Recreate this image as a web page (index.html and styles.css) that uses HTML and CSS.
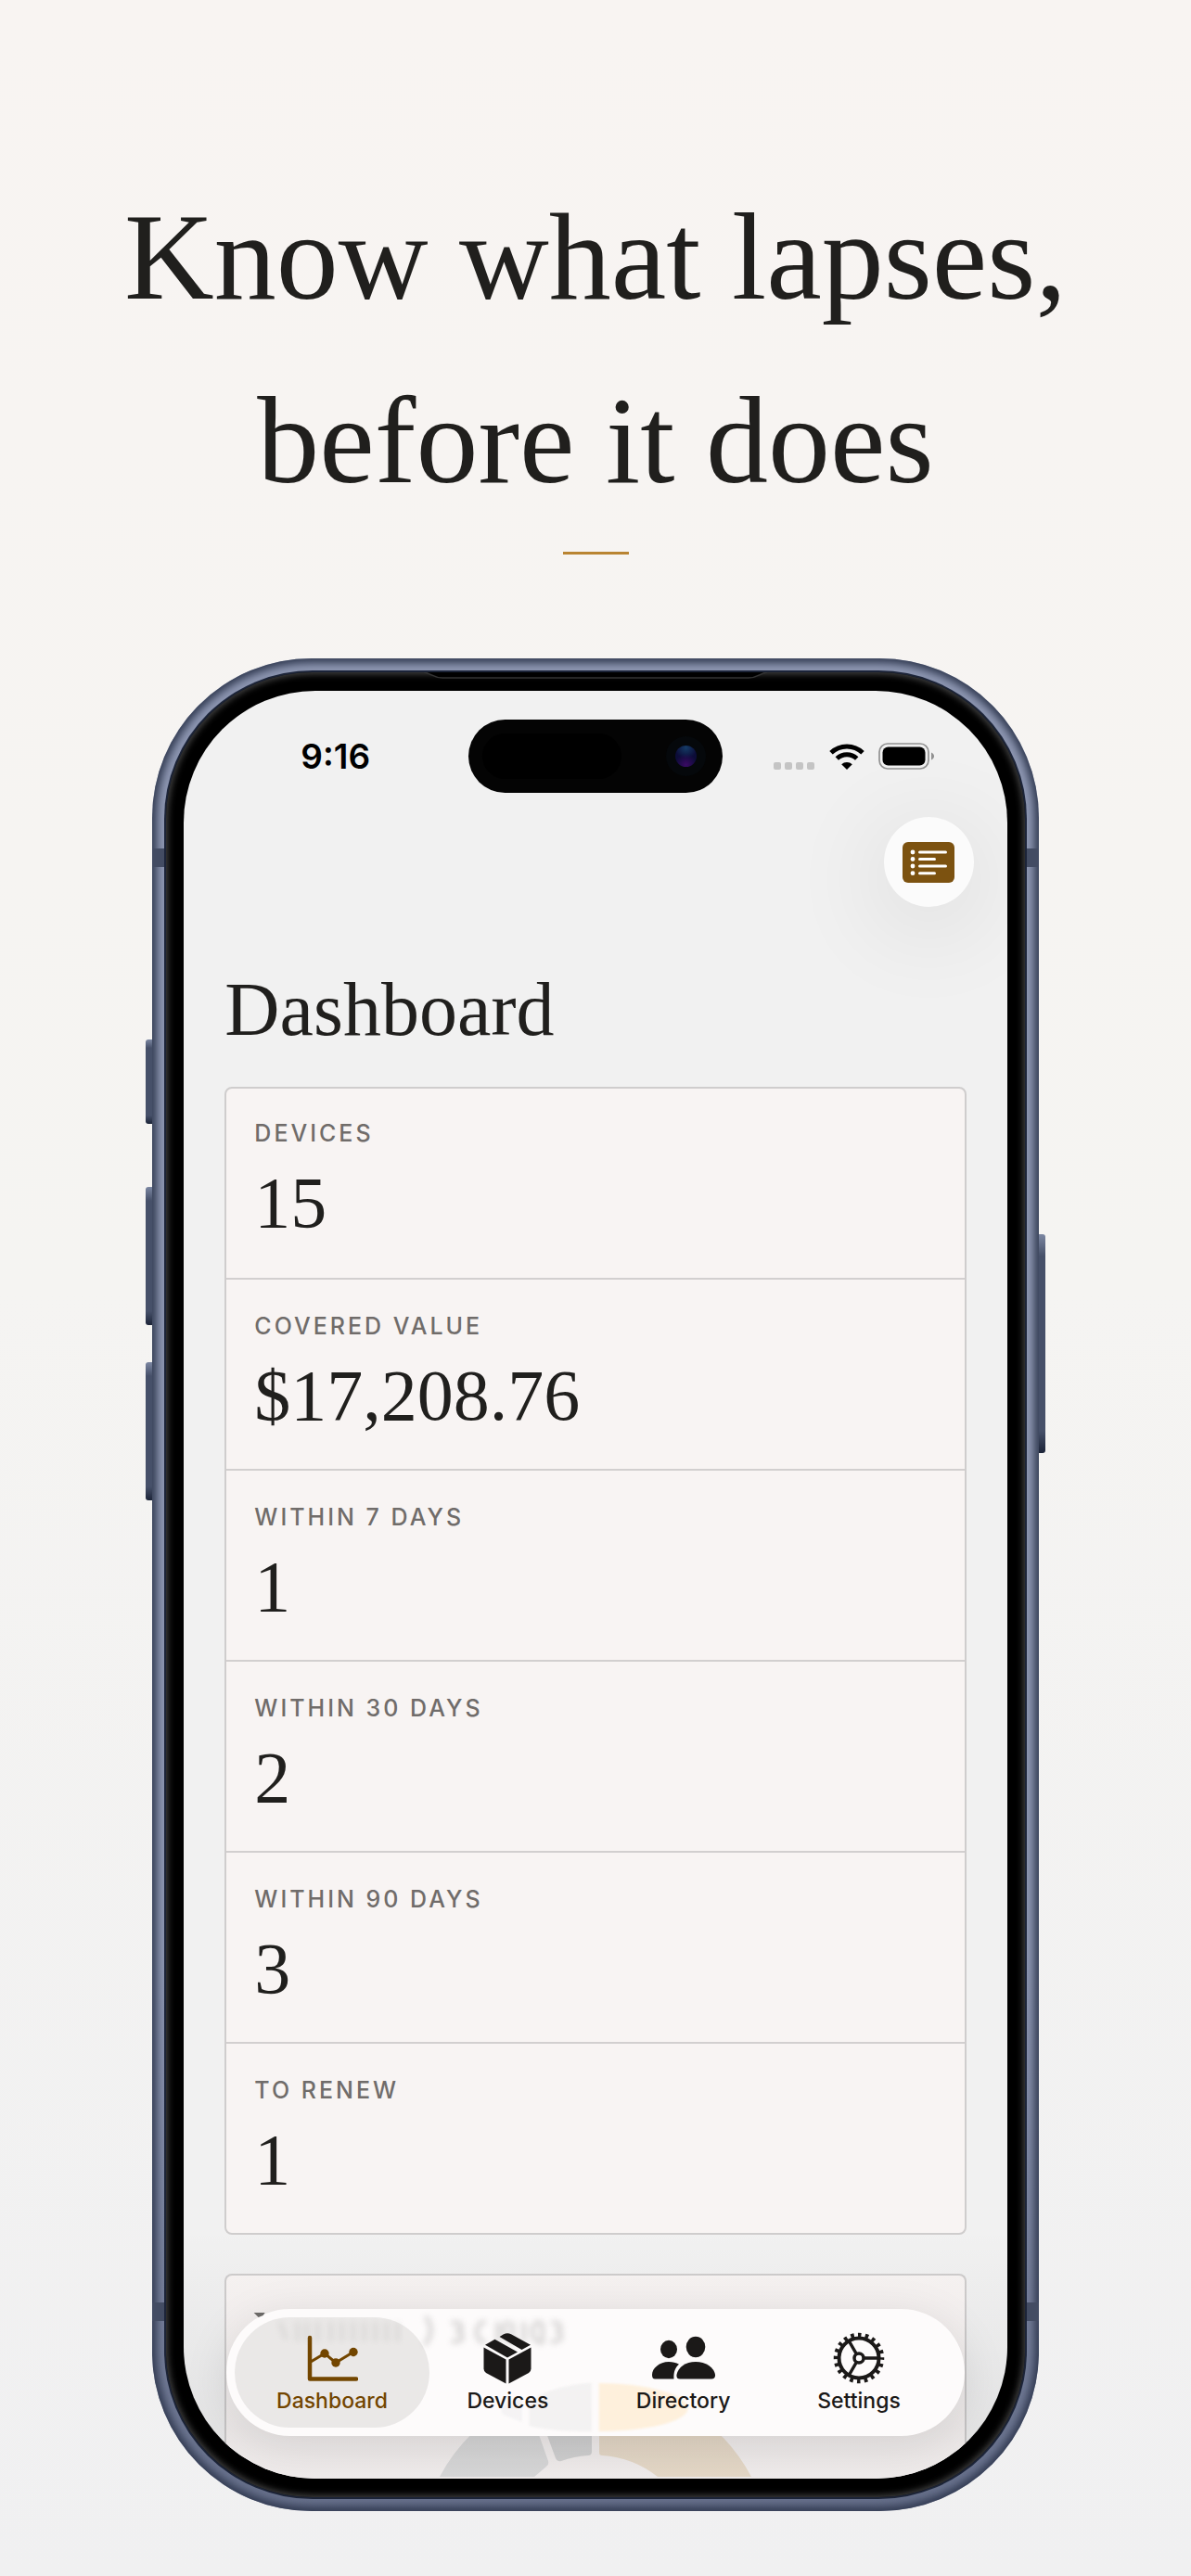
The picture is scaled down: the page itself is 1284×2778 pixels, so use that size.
FILE: index.html
```html
<!DOCTYPE html>
<html lang="en">
<head>
    <meta charset="UTF-8">
    <meta name="viewport" content="width=device-width, initial-scale=1.0">
    <title>Know what lapses, before it does</title>
    <link rel="stylesheet" href="styles.css">
</head>
<body>
    <header class="hero">
        <h1>Know what lapses,<br>before it does</h1>
        <div class="rule"></div>
    </header>

    <div class="phone">
        <i class="side action"></i>
        <i class="side volume-up"></i>
        <i class="side volume-down"></i>
        <i class="side power"></i>
        <i class="antenna top-left"></i>
        <i class="antenna top-right"></i>
        <i class="antenna bottom-left"></i>
        <i class="antenna bottom-right"></i>

        <div class="bezel">
            <svg class="speaker" viewBox="0 0 370 8" preserveAspectRatio="none">
                <path d="M0 0H370C362 1 360 6 350 6H20C10 6 8 1 0 0Z" fill="#000"/>
                <path d="M0 0C8 1 10 6 20 6H350C360 6 362 1 370 0" fill="none" stroke="#333" stroke-width="1.5"/>
            </svg>

            <div class="screen">
                <div class="status-bar">
                    <span class="time">9:16</span>
                    <div class="island"><span class="sensor"></span><span class="camera"></span></div>
                    <div class="indicators">
                        <span class="signal"><i></i><i></i><i></i><i></i></span>
                        <svg class="wifi" viewBox="0 0 38 28">
                            <g fill="none" stroke="#000" stroke-width="5">
                                <path d="M2 9.8A24.5 24.5 0 0 1 36 9.8"/>
                                <path d="M8.3 16A15.5 15.5 0 0 1 29.7 16"/>
                            </g>
                            <path d="M19 28L13.2 22.2A8.4 8.4 0 0 1 24.8 22.2Z" fill="#000"/>
                        </svg>
                        <svg class="battery" viewBox="0 0 61 29">
                            <rect x="1" y="1" width="53" height="27" rx="9" fill="none" stroke="#919191" stroke-width="1.7"/>
                            <rect x="4.5" y="4.5" width="46" height="20" rx="6" fill="#000"/>
                            <path d="M57 10.5C61 12 61 17 57 18.5Z" fill="#919191"/>
                        </svg>
                    </div>
                </div>

                <div class="toolbar">
                    <button class="list-button" aria-label="Show list">
                        <svg viewBox="0 0 56 44">
                            <rect width="56" height="44" rx="6" fill="#7c5210"/>
                            <g fill="#fff">
                                <circle cx="11" cy="11" r="2.4"/>
                                <circle cx="11" cy="18.5" r="2.4"/>
                                <circle cx="11" cy="26" r="2.4"/>
                                <circle cx="11" cy="33.7" r="2.4"/>
                            </g>
                            <path d="M18.5 11H46.5M18.5 18.5H34.5M18.5 26H46.5M18.5 33.7H34.5" stroke="#fff" stroke-width="3" stroke-linecap="round"/>
                        </svg>
                    </button>
                </div>

                <main>
                    <h2>Dashboard</h2>
                    <dl class="card">
                        <div class="stat"><dt>DEVICES</dt><dd>15</dd></div>
                        <div class="stat"><dt>COVERED VALUE</dt><dd>$17,208.76</dd></div>
                        <div class="stat"><dt>WITHIN 7 DAYS</dt><dd>1</dd></div>
                        <div class="stat"><dt>WITHIN 30 DAYS</dt><dd>2</dd></div>
                        <div class="stat"><dt>WITHIN 90 DAYS</dt><dd>3</dd></div>
                        <div class="stat"><dt>TO RENEW</dt><dd>1</dd></div>
                    </dl>
                    <div class="card chart-card">
                        <svg class="donut" viewBox="0 0 380 102">
                            <path d="M194 2A187 187 0 0 1 358 102H257A108 108 0 0 0 197 79Q194 79 194 76Z" fill="#ecdfcd"/>
                            <path d="M186 2A187 187 0 0 0 122 14L147 82Q149 86 153 85Q167 80 182 79Q186 79 186 75Z" fill="#d7d7d7"/>
                            <path d="M115 17A187 187 0 0 0 22 102H124L137 91Q140 89 139 85Z" fill="#dedede"/>
                        </svg>
                    </div>
                </main>

                <div class="fade"></div>
                <nav class="tab-bar">
                    <a class="tab active" href="#dashboard">
                        <svg viewBox="0 0 56 56">
                            <g fill="none" stroke="#734600" stroke-linecap="round" stroke-linejoin="round">
                                <path d="M4 6V50.5H54" stroke-width="4.5"/>
                                <path d="M5 32L20 23L32 33L50 22" stroke-width="3"/>
                            </g>
                            <g fill="#734600">
                                <circle cx="20" cy="23" r="4.7"/>
                                <circle cx="32" cy="33" r="4.7"/>
                                <circle cx="51" cy="21.5" r="4.7"/>
                            </g>
                        </svg>
                        Dashboard
                    </a>
                    <a class="tab" href="#devices">
                        <svg viewBox="0 0 56 56" fill="#1b1918">
                            <path d="M19.5 5L24 2.3Q28 0 32 2.3L53 13.7L43.5 19Z"/>
                            <path d="M4 13.7L14.5 7.8L39 21.5L28 27.5Z"/>
                            <path d="M2.5 16.5L26.5 29.5V55.5L5 44Q2.5 42.5 2.5 39.5Z"/>
                            <path d="M53.5 16.5L29.5 29.5V55.5L51 44Q53.5 42.5 53.5 39.5Z"/>
                        </svg>
                        Devices
                    </a>
                    <a class="tab" href="#directory">
                        <svg class="wide" viewBox="0 0 70 56" fill="#1b1918">
                            <ellipse cx="19" cy="18.5" rx="9" ry="9.7"/>
                            <ellipse cx="48" cy="16" rx="10.3" ry="11.3"/>
                            <path d="M1 46C1 39 9 32 19 32C23 32 27 33 30 34.8C26 38 24 43 24.5 50.5H4Q1 50.5 1 46Z"/>
                            <path d="M27.5 46C29 38 37 32 48 32C59 32 68 38.5 69 46Q69.5 50.5 65 50.5H31Q27 50.5 27.5 46Z"/>
                        </svg>
                        Directory
                    </a>
                    <a class="tab" href="#settings">
                        <svg viewBox="0 0 56 56" fill="none" stroke="#1b1918">
                            <circle cx="28" cy="28" r="21.5" stroke-width="4"/>
                            <circle cx="28" cy="28" r="25" stroke-width="4.5" stroke-dasharray="3.6 4.254" stroke-dashoffset="1.8"/>
                            <circle cx="28" cy="28" r="5" stroke-width="3.5"/>
                            <path d="M34 28H49M25 23L17.5 10M25 33L17.5 46" stroke-width="3.5"/>
                        </svg>
                        Settings
                    </a>
                    <!-- content refracted through the glass bar -->
                    <svg class="glass" viewBox="0 0 794 137">
                        <path d="M29 4H41L39 7L34 9Z" fill="#6a6866"/>
                        <g class="soft">
                            <path d="M401 80C450 80 497 92 497 107C497 122 450 132 401 132Z" fill="#ffe9c8" opacity="0.6"/>
                            <path d="M393 80C365 81 326 92 326 107V126C345 131 370 132 393 132Z" fill="#e9e9ea" opacity="0.5"/>
                            <path d="M318 96C300 100 292 108 298 114L318 122Z" fill="#e9e9ea" opacity="0.4"/>
                        </g>
                        <g class="smudge" fill="none" stroke="#8a8886" stroke-width="5">
                            <path d="M57 14L64 33M76 14V35M86 14V35M98 14V35M112 14V35M124 14V35M136 14V35M148 14V35M160 14V35M172 14V35M184 14V35" opacity="0.5"/>
                            <path d="M214 8C222 18 222 28 213 39M242 15C256 13 256 24 246 24C257 24 257 37 242 35M279 14C266 14 266 36 279 36M292 14V36M304 14C296 14 296 36 308 36V14M320 14V36M338 14C326 14 326 36 340 36V14M350 15C362 13 362 24 354 24C363 24 363 37 349 35"/>
                        </g>
                    </svg>
                </nav>
            </div>
        </div>
    </div>
</body>
</html>
```
FILE: styles.css
```css
* {
    margin: 0;
    padding: 0;
    box-sizing: border-box;
}

body {
    min-height: 100vh;
    background: linear-gradient(#f8f4f2, #f5f4f2 50%, #f0f0f1);
    color: #201f1d;
    font-family: Inter, "Liberation Sans", sans-serif;
}

.hero {
    display: flex;
    flex-direction: column;
    align-items: center;
    padding-top: 178px;
}

h1 {
    font: 400 134px/198px "Liberation Serif", serif;
    text-align: center;
}

.rule {
    width: 71px;
    height: 3px;
    margin-top: 21px;
    background: #b98432;
}

.phone {
    position: relative;
    width: 74.4%;
    margin: 112px auto 71px;
    padding: 15px;
    border-radius: 172px;
    background: linear-gradient(#8d96b1, #8d96b1 70%, #666f8a);
    box-shadow: inset 0 0 8px 5px #333c53;
}

.bezel {
    position: relative;
    padding: 20px 19px;
    border-radius: 158px;
    background: #000;
    box-shadow: inset 0 0 7px 2px #444, 0 0 0 2px #1c2438;
}

.speaker {
    position: absolute;
    top: 0;
    left: 50%;
    width: 370px;
    height: 8px;
    margin-left: -185px;
}

.side {
    position: absolute;
    left: -7px;
    width: 7px;
    border-radius: 3px 0 0 3px;
    background: linear-gradient(#7c87a2, #465069 10%, #465069 90%, #1c2438);
}

.action { top: 411px; height: 91px; }
.volume-up { top: 570px; height: 149px; }
.volume-down { top: 759px; height: 149px; }

.power {
    top: 621px;
    left: auto;
    right: -7px;
    height: 236px;
    border-radius: 0 3px 3px 0;
}

.antenna {
    position: absolute;
    width: 15px;
    height: 20px;
    background: #434c63;
}

.top-left { top: 205px; left: 0; }
.top-right { top: 205px; right: 0; }
.bottom-left { bottom: 205px; left: 0; }
.bottom-right { bottom: 205px; right: 0; }

.screen {
    position: relative;
    display: flow-root;
    overflow: hidden;
    border-radius: 142px;
    background: #f1f1f1;
}

.status-bar {
    display: grid;
    grid-template-columns: 1fr 274px 1fr;
    align-items: center;
    padding-top: 31px;
}

.time {
    padding-left: 20px;
    font-size: 37px;
    font-weight: 600;
    line-height: 40px;
    color: #000;
    text-align: center;
}

.island {
    position: relative;
    height: 79px;
    border-radius: 40px;
    background: #040404;
}

.sensor {
    position: absolute;
    top: 15px;
    left: 15px;
    width: 150px;
    height: 49px;
    border-radius: 25px;
    background: #000;
}

.camera {
    position: absolute;
    top: 28px;
    right: 28px;
    width: 23px;
    height: 23px;
    border-radius: 50%;
    background: radial-gradient(circle at 50% 90%, #3a0a63, transparent 50%), radial-gradient(circle at 50% 10%, #153c66, transparent 50%), #0c0c38;
    box-shadow: 0 0 0 10px #05080b;
}

.indicators {
    display: flex;
    align-items: center;
    padding-left: 55px;
}

.signal {
    display: flex;
    gap: 4px;
    padding-top: 21px;
    margin-right: 16px;
}

.signal i {
    width: 8px;
    height: 8px;
    border-radius: 2px;
    background: #c4c4c4;
}

.wifi {
    width: 38px;
    height: 28px;
    margin-right: 15px;
}

.battery {
    width: 61px;
    height: 29px;
}

.toolbar {
    display: flex;
    justify-content: flex-end;
    padding: 26px 36px 0;
}

.list-button {
    display: grid;
    place-items: center;
    width: 97px;
    height: 97px;
    border: 0;
    border-radius: 50%;
    background: #fbfbfb;
    box-shadow: 0 18px 100px 16px rgba(0, 0, 0, 0.07);
}

.list-button svg {
    width: 56px;
    height: 44px;
}

main {
    padding: 0 44px;
}

h2 {
    margin-top: 61px;
    font: 400 82px/100px "Liberation Serif", serif;
}

.card {
    margin-top: 33px;
    border: 2px solid #cfcdcd;
    border-radius: 8px;
    background: #f8f4f3;
}

.stat {
    height: 206px;
    padding: 35px 30px 0;
    border-top: 2px solid #d2cfcf;
}

.stat:first-child {
    height: 204px;
    padding-top: 33px;
    border-top: 0;
}

dt {
    font-size: 25px;
    font-weight: 500;
    line-height: 30px;
    letter-spacing: 3px;
    color: #706c6a;
}

dd {
    margin-top: 16px;
    font: 400 78px/88px "Liberation Serif", serif;
}

.chart-card {
    height: 221px;
    margin-top: 42px;
    padding-top: 115px;
    border-bottom: 0;
    border-radius: 8px 8px 0 0;
}

.donut {
    display: block;
    width: 380px;
    height: 102px;
    margin: 0 auto;
}

.fade {
    position: absolute;
    left: 0;
    right: 0;
    bottom: 0;
    height: 270px;
    background: linear-gradient(transparent, rgba(20, 20, 30, 0.06) 80%, rgba(20, 20, 30, 0.04));
}

.tab-bar {
    position: absolute;
    left: 46px;
    right: 46px;
    bottom: 46px;
    display: flex;
    height: 137px;
    padding: 0 19px;
    border-radius: 69px;
    background: #fdfbfb;
    box-shadow: 0 10px 50px rgba(0, 0, 0, 0.1);
}

.glass {
    position: absolute;
    top: 0;
    left: 0;
    width: 100%;
    height: 100%;
}

.soft {
    filter: blur(1px);
}

.smudge {
    filter: blur(3px);
    opacity: 0.3;
}

.tab {
    position: relative;
    z-index: 1;
    flex: 1;
    display: flex;
    flex-direction: column;
    align-items: center;
    padding-top: 25px;
    font-size: 23px;
    font-weight: 500;
    line-height: 30px;
    color: #1b1918;
    text-decoration: none;
}

.tab svg {
    width: 56px;
    height: 56px;
    margin-bottom: 3px;
}

.tab svg.wide {
    width: 70px;
}

.tab.active {
    z-index: 0;
    color: #734600;
}

.tab.active::before {
    content: "";
    position: absolute;
    z-index: -1;
    top: 9px;
    bottom: 9px;
    left: -10px;
    right: -10px;
    border-radius: 60px;
    background: #eae8e7;
}
```
